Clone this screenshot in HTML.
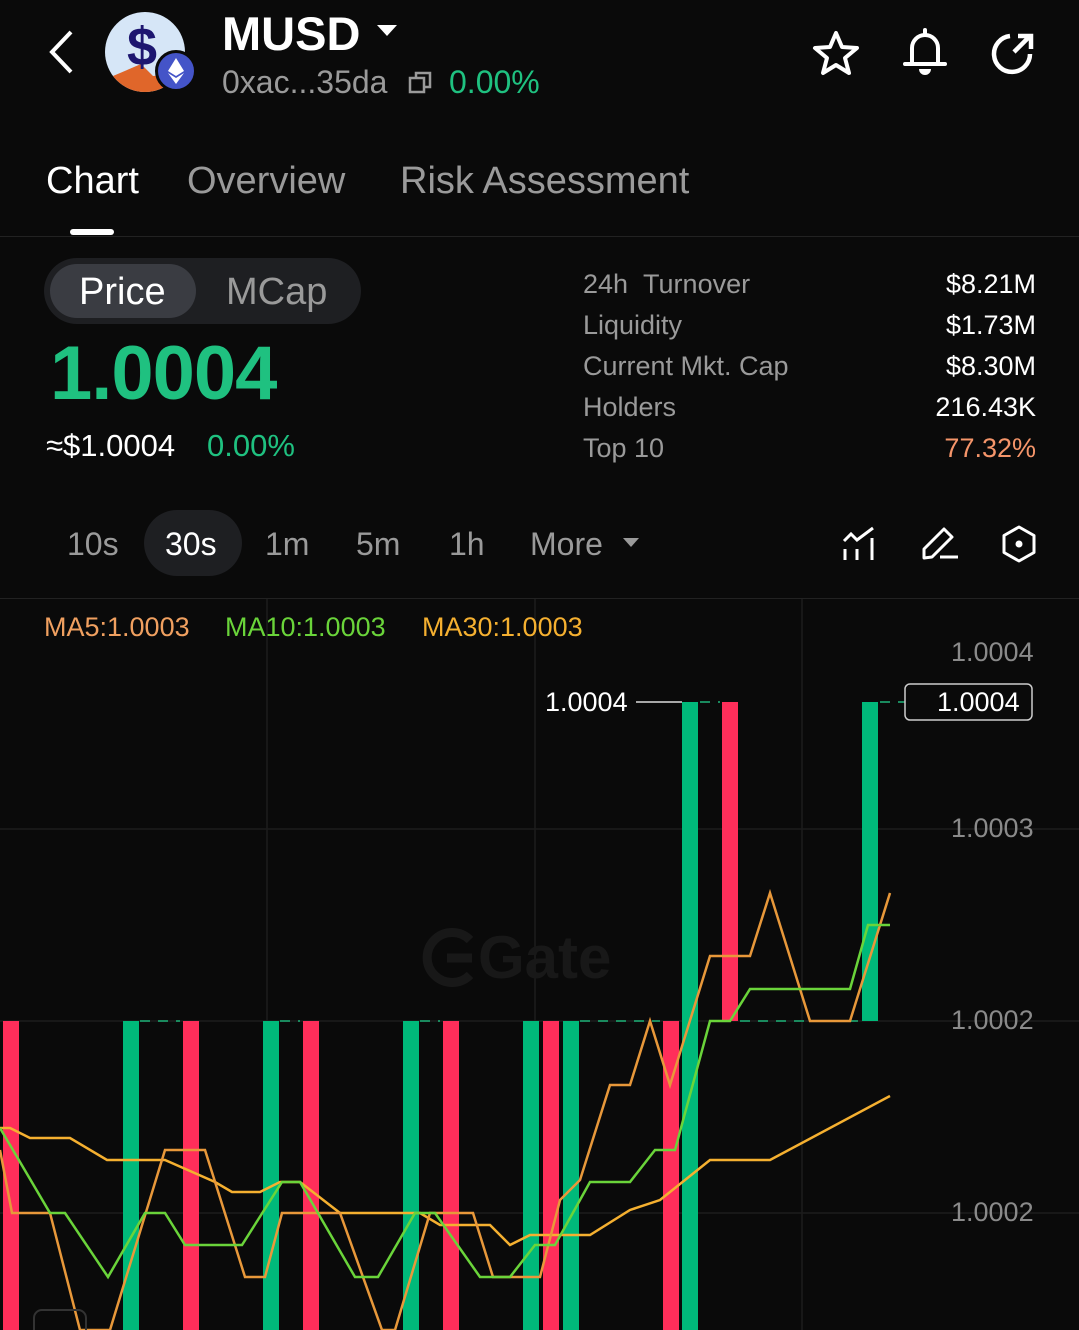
<!DOCTYPE html>
<html><head><meta charset="utf-8"><style>
*{margin:0;padding:0;box-sizing:border-box}
body{width:1079px;height:1330px;background:#0a0a0a;overflow:hidden;position:relative;font-family:"Liberation Sans",sans-serif;color:#fff}
.a{position:absolute;white-space:nowrap}
.g{color:#1fc180}
.lbl{color:#9a9a9a;font-size:27px}
.val{color:#fff;font-size:27px;right:43px;text-align:right}
</style></head><body>
<!-- header -->
<svg class="a" style="left:44px;top:28px" width="34" height="48" viewBox="0 0 34 48"><path d="M27 4 L8 24 L27 44" stroke="#fff" stroke-width="4" fill="none"/></svg>
<div class="a" style="left:105px;top:12px;width:80px;height:80px;border-radius:50%;background:#d6e6f7;overflow:hidden">
 <div class="a" style="left:0;top:52px;width:80px;height:30px;background:#e0662a;clip-path:polygon(10% 40%,45% 0,60% 40%,100% 30%,100% 100%,0 100%)"></div>
 <div class="a" style="left:22px;top:4px;font-size:54px;font-weight:bold;color:#1d1670">$</div>
</div>
<div class="a" style="left:155px;top:50px;width:42px;height:42px;border-radius:50%;background:#4454c8;border:3px solid #0a0a0a"></div>
<svg class="a" style="left:166px;top:56px" width="20" height="30" viewBox="0 0 20 30"><path d="M10 2 L18 15 L10 20 L2 15Z M2 17 L10 22 L18 17 L10 28Z" fill="#fff"/></svg>
<div class="a" style="left:222px;top:6px;font-size:47px;font-weight:bold">MUSD</div>
<svg class="a" style="left:376px;top:24px" width="22" height="14"><path d="M1 1 L21 1 L11 12Z" fill="#fff"/></svg>
<div class="a" style="left:222px;top:64px;font-size:32px;color:#9a9a9a">0xac...35da</div>
<svg class="a" style="left:408px;top:70px" width="26" height="26" viewBox="0 0 26 26"><rect x="2" y="8" width="14" height="14" stroke="#9a9a9a" stroke-width="2.5" fill="none"/><path d="M8 8 V3 H22 V17 H16" stroke="#9a9a9a" stroke-width="2.5" fill="none"/></svg>
<div class="a g" style="left:449px;top:64px;font-size:32px">0.00%</div>
<svg class="a" style="left:810px;top:28px" width="52" height="50" viewBox="0 0 52 50"><path d="M26 5 L32 19 L47 20 L35 30 L39 45 L26 37 L13 45 L17 30 L5 20 L20 19Z" stroke="#fff" stroke-width="4" fill="none" stroke-linejoin="round"/></svg>
<svg class="a" style="left:900px;top:26px" width="50" height="52" viewBox="0 0 50 52"><path d="M25 4 V8 M12 36 V22 A13 13 0 0 1 38 22 V36 M5 38 H45" stroke="#fff" stroke-width="4" fill="none" stroke-linecap="round"/><path d="M19 43 H31 A6 6 0 0 1 19 43Z" fill="#fff"/></svg>
<svg class="a" style="left:988px;top:28px" width="50" height="50" viewBox="0 0 50 50"><path d="M22 8 A18 18 0 1 0 42 26" stroke="#fff" stroke-width="4.5" fill="none"/><path d="M26 24 L42 8 M30 8 H43 V21" stroke="#fff" stroke-width="4.5" fill="none"/></svg>
<!-- tabs -->
<div class="a" style="left:46px;top:160px;font-size:38px">Chart</div>
<div class="a" style="left:187px;top:160px;font-size:38px;color:#9a9a9a">Overview</div>
<div class="a" style="left:400px;top:160px;font-size:38px;color:#9a9a9a">Risk Assessment</div>
<div class="a" style="left:70px;top:229px;width:44px;height:6px;border-radius:3px;background:#fff"></div>
<div class="a" style="left:0;top:236px;width:1079px;height:1px;background:#222"></div>
<!-- price section -->
<div class="a" style="left:44px;top:258px;width:317px;height:66px;border-radius:33px;background:#1e1f22"></div>
<div class="a" style="left:50px;top:264px;width:146px;height:54px;border-radius:27px;background:#3a3c42"></div>
<div class="a" style="left:79px;top:271px;font-size:38px">Price</div>
<div class="a" style="left:226px;top:271px;font-size:38px;color:#9a9a9a">MCap</div>
<div class="a g" style="left:50px;top:330px;font-size:76px;font-weight:bold;letter-spacing:-1px">1.0004</div>
<div class="a" style="left:46px;top:428px;font-size:31px">≈$1.0004</div>
<div class="a g" style="left:207px;top:428px;font-size:31px">0.00%</div>
<div class="a lbl" style="left:583px;top:269px">24h&nbsp;&nbsp;Turnover</div>
<div class="a lbl" style="left:583px;top:310px">Liquidity</div>
<div class="a lbl" style="left:583px;top:351px">Current Mkt. Cap</div>
<div class="a lbl" style="left:583px;top:392px">Holders</div>
<div class="a lbl" style="left:583px;top:433px">Top 10</div>
<div class="a val" style="top:269px">$8.21M</div>
<div class="a val" style="top:310px">$1.73M</div>
<div class="a val" style="top:351px">$8.30M</div>
<div class="a val" style="top:392px">216.43K</div>
<div class="a val" style="top:433px;color:#f5956a">77.32%</div>
<!-- timeframes -->
<div class="a" style="left:144px;top:510px;width:98px;height:66px;border-radius:33px;background:#1e1f22"></div>
<div class="a" style="left:67px;top:526px;font-size:32px;color:#9a9a9a">10s</div>
<div class="a" style="left:165px;top:526px;font-size:32px">30s</div>
<div class="a" style="left:265px;top:526px;font-size:32px;color:#9a9a9a">1m</div>
<div class="a" style="left:356px;top:526px;font-size:32px;color:#9a9a9a">5m</div>
<div class="a" style="left:449px;top:526px;font-size:32px;color:#9a9a9a">1h</div>
<div class="a" style="left:530px;top:526px;font-size:32px;color:#9a9a9a">More</div>
<svg class="a" style="left:622px;top:537px" width="18" height="12"><path d="M1 1 H17 L9 10Z" fill="#9a9a9a"/></svg>
<svg class="a" style="left:840px;top:525px" width="38" height="38" viewBox="0 0 38 38"><path d="M4 16 L11 9 L17 15 L33 3" stroke="#fff" stroke-width="3" fill="none"/><path d="M5 24 V35 M17 24 V35 M32 13 V35" stroke="#fff" stroke-width="3"/></svg>
<svg class="a" style="left:920px;top:524px" width="40" height="38" viewBox="0 0 40 38"><path d="M4 34 V25 L24 5 L32 13 L12 33Z" stroke="#fff" stroke-width="3" fill="none" stroke-linejoin="round"/><path d="M20 33 H38" stroke="#fff" stroke-width="3"/></svg>
<svg class="a" style="left:1000px;top:524px" width="38" height="40" viewBox="0 0 38 40"><path d="M19 3 L34 11.5 V28.5 L19 37 L4 28.5 V11.5Z" stroke="#fff" stroke-width="3" fill="none" stroke-linejoin="round"/><circle cx="19" cy="20" r="3.5" fill="#fff"/></svg>
<div class="a" style="left:0;top:598px;width:1079px;height:1px;background:#222"></div>
<!-- chart -->
<svg class="a" style="left:0;top:0" width="1079" height="1330">
<g stroke="#1c1c1c" stroke-width="1.5">
<path d="M0 829 H1079 M0 1021 H1079 M0 1213 H1079 M267 599 V1330 M535 599 V1330 M802 599 V1330"/>
</g>
<path d="M470 940 A25 25 0 1 0 470 975 M447 958 H472" stroke="#181818" stroke-width="9" fill="none"/>
<text x="478" y="978" font-family="Liberation Sans" font-weight="bold" font-size="60" fill="#181818">Gate</text>
<g fill="#ff2e5a">
<rect x="3" y="1021" width="16" height="309"/><rect x="183" y="1021" width="16" height="309"/><rect x="303" y="1021" width="16" height="309"/><rect x="443" y="1021" width="16" height="309"/><rect x="543" y="1021" width="16" height="309"/><rect x="663" y="1021" width="16" height="309"/><rect x="722" y="702" width="16" height="319"/>
</g>
<g fill="#00b97a">
<rect x="123" y="1021" width="16" height="309"/><rect x="263" y="1021" width="16" height="309"/><rect x="403" y="1021" width="16" height="309"/><rect x="523" y="1021" width="16" height="309"/><rect x="563" y="1021" width="16" height="309"/><rect x="682" y="702" width="16" height="628"/><rect x="862" y="702" width="16" height="319"/>
</g>
<g stroke="#1a8a5e" stroke-width="2" stroke-dasharray="10 8">
<path d="M140 1021 H180 M280 1021 H300 M420 1021 H440 M580 1021 H660 M700 702 H720 M740 1021 H860 M880 702 H905"/>
</g>
<path d="M636 702 H682" stroke="#ddd" stroke-width="1.5"/>
<polyline fill="none" stroke="#f5b030" stroke-width="2.5" points="0,1128 10,1128 30,1138 70,1138 107,1160 165,1160 215,1182 232,1192 260,1192 280,1182 300,1182 340,1213 380,1213 420,1213 440,1225 490,1225 510,1245 530,1235 590,1235 630,1210 660,1200 710,1160 770,1160 890,1096"/>
<polyline fill="none" stroke="#e8983a" stroke-width="2.5" points="0,1150 12,1213 50,1213 80,1330 110,1330 165,1150 205,1150 245,1277 265,1277 282,1213 340,1213 382,1330 395,1330 430,1213 473,1213 493,1277 540,1277 560,1200 580,1180 610,1085 630,1085 650,1021 670,1085 710,956 750,956 770,893 810,1021 850,1021 890,893"/>
<polyline fill="none" stroke="#6ad43a" stroke-width="2.5" points="0,1128 50,1213 65,1213 108,1277 145,1213 165,1213 185,1245 242,1245 282,1182 300,1182 355,1277 378,1277 415,1213 435,1213 480,1277 510,1277 535,1245 555,1245 590,1182 630,1182 655,1150 675,1150 710,1021 730,1021 750,989 850,989 868,925 890,925"/>
<rect x="905" y="684" width="127" height="36" rx="5" fill="#0a0a0a" stroke="#ccc" stroke-width="1.5"/>
<rect x="34" y="1310" width="52" height="40" rx="8" fill="none" stroke="#333" stroke-width="2"/>
</svg>
<div class="a" style="left:44px;top:612px;font-size:27px;color:#f0a060">MA5:1.0003</div>
<div class="a" style="left:225px;top:612px;font-size:27px;color:#6ad43a">MA10:1.0003</div>
<div class="a" style="left:422px;top:612px;font-size:27px;color:#f5b030">MA30:1.0003</div>
<div class="a" style="left:951px;top:637px;font-size:27px;color:#8a8a8a">1.0004</div>
<div class="a" style="left:951px;top:813px;font-size:27px;color:#8a8a8a">1.0003</div>
<div class="a" style="left:951px;top:1005px;font-size:27px;color:#8a8a8a">1.0002</div>
<div class="a" style="left:951px;top:1197px;font-size:27px;color:#8a8a8a">1.0002</div>
<div class="a" style="left:545px;top:687px;font-size:27px">1.0004</div>
<div class="a" style="left:937px;top:687px;font-size:27px">1.0004</div>
</body></html>
